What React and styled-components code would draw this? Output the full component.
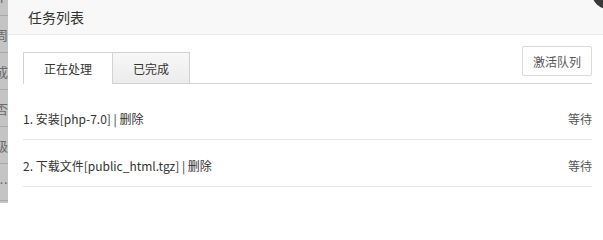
import styled, { createGlobalStyle } from 'styled-components';

const GlobalStyle = createGlobalStyle`
  html, body {
    margin: 0;
    padding: 0;
    overflow: hidden;
    background: #fff;
  }
  body {
    font-family: "Noto Sans CJK SC", "Noto Sans", sans-serif;
    color: #333;
  }
`;

const Page = styled.div`
  display: flex;
  width: 603px;
  height: 203px;
  overflow: hidden;
`;

const Backdrop = styled.div`
  width: 8px;
  flex-shrink: 0;
  background: #c4c4c4;
  display: flex;
  flex-direction: column;
  overflow: hidden;
`;

const BackdropRow = styled.div`
  height: 37px;
  flex-shrink: 0;
  border-bottom: 1px solid #a9a9a9;
  box-sizing: border-box;
  display: flex;
  align-items: center;
  justify-content: flex-end;
  font-size: 13px;
  color: #6a6a6a;
  white-space: nowrap;
  margin-top: ${(p) => (p.$first ? '-21px' : '0')};
`;

const Modal = styled.div`
  position: relative;
  flex: 1;
  background: #fff;
  display: flex;
  flex-direction: column;
`;

const Header = styled.div`
  height: 34px;
  background: #f8f8f8;
  border-bottom: 1px solid #eaeaea;
  display: flex;
  align-items: center;
  padding-left: 20px;
  font-size: 14px;
  color: #333;
`;

const CloseDot = styled.span`
  position: absolute;
  right: -21px;
  top: -23px;
  width: 32px;
  height: 32px;
  border-radius: 50%;
  background: #3a3a3a;
`;

const Body = styled.div`
  padding: 14px 11px 0 15px;
  display: flex;
  flex-direction: column;
`;

const TabBar = styled.div`
  display: flex;
  align-items: flex-end;
  border-bottom: 1px solid #d2d2d2;
  height: 34px;
`;

const Tab = styled.div`
  box-sizing: border-box;
  padding: 0 20px;
  display: flex;
  align-items: center;
  font-size: 12px;
  color: #333;
  border: 1px solid #d2d2d2;
  border-bottom: none;
  margin-bottom: ${(p) => (p.$active ? '-1px' : '0')};
  height: ${(p) => (p.$active ? '32px' : '31px')};
  background: ${(p) => (p.$active ? '#fff' : 'linear-gradient(#f7f7f7, #ececec)')};
  & + & {
    border-left: none;
  }
`;

const Spacer = styled.div`
  flex: 1;
`;

const ActionButton = styled.button`
  align-self: flex-start;
  margin-top: -3px;
  height: 30px;
  padding: 0 10px;
  border: 1px solid #d9d9d9;
  border-radius: 2px;
  background: #fff;
  font-family: inherit;
  font-size: 12px;
  color: #555;
  cursor: pointer;
`;

const List = styled.div`
  padding-top: 9px;
  display: flex;
  flex-direction: column;
`;

const Row = styled.div`
  height: 47px;
  box-sizing: border-box;
  border-bottom: 1px solid #e4e4e4;
  display: flex;
  align-items: center;
  justify-content: space-between;
  font-size: 12px;
  color: #333;
  padding-top: 5px;
`;

const Status = styled.span`
  color: #555;
`;

const DeleteLink = styled.a`
  color: #333;
  text-decoration: none;
  cursor: pointer;
`;

const backdrop = ['P', '周', '成', '否', '级', '…'];

const tasks = [
  { id: 1, name: '安装[php-7.0]', status: '等待' },
  { id: 2, name: '下载文件[public_html.tgz]', status: '等待' },
];

export default function App() {
  return (
    <>
      <GlobalStyle />
      <Page>
        <Backdrop>
          {backdrop.map((t, i) => (
            <BackdropRow key={i} $first={i === 0}>
              {t}
            </BackdropRow>
          ))}
        </Backdrop>
        <Modal>
          <Header>任务列表</Header>
          <CloseDot />
          <Body>
            <TabBar>
              <Tab $active>正在处理</Tab>
              <Tab>已完成</Tab>
              <Spacer />
              <ActionButton>激活队列</ActionButton>
            </TabBar>
            <List>
              {tasks.map((t) => (
                <Row key={t.id}>
                  <span>
                    {t.id}. {t.name} | <DeleteLink>删除</DeleteLink>
                  </span>
                  <Status>{t.status}</Status>
                </Row>
              ))}
            </List>
          </Body>
        </Modal>
      </Page>
    </>
  );
}
